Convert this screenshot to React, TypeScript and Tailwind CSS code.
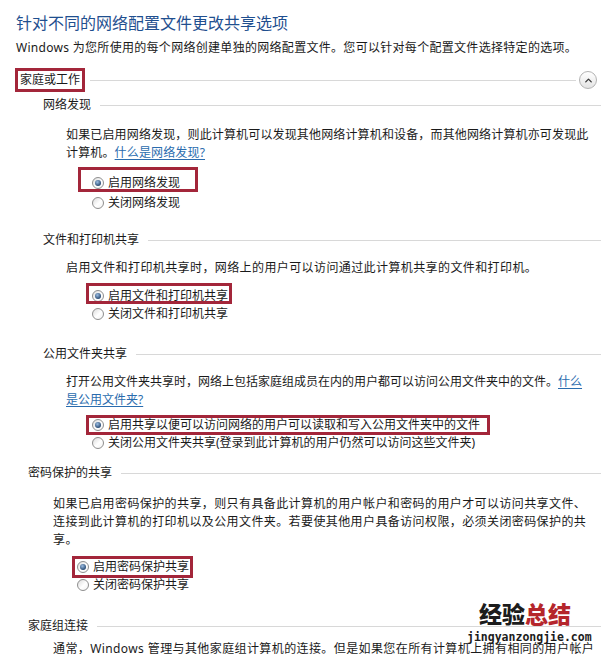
import { ChevronUp } from "lucide-react";
import clsx from "clsx";

type Option = {
  label: string;
  checked?: boolean;
  box?: string; // red annotation frame, position relative to the radio row
};

function Radio({ checked }: { checked?: boolean }) {
  return (
    <span className="flex h-[12px] w-[12px] shrink-0 items-center justify-center rounded-full border border-[#8e8e8e] bg-[linear-gradient(135deg,#dcdcdc,#ffffff_55%,#f1f1f1)]">
      {checked && (
        <span className="h-[6px] w-[6px] rounded-full bg-[radial-gradient(circle_at_40%_35%,#9cbde2,#24466f_75%)]" />
      )}
    </span>
  );
}

function Heading({ title, className }: { title: string; className: string }) {
  return (
    <div className={clsx("flex h-[18px] items-center pr-[6px]", className)}>
      <span className="leading-[18px]">{title}</span>
      <div className="ml-[9px] h-px flex-1 bg-[#d8d8d8]" />
    </div>
  );
}

function OptionRow({ opt, className }: { opt: Option; className: string }) {
  return (
    <div className={clsx("flex", className)}>
      <div className="relative flex h-[18px] items-center gap-[4px]">
        <Radio checked={opt.checked} />
        <span className="whitespace-nowrap leading-[18px]">{opt.label}</span>
        {opt.box && (
          <span
            className={clsx(
              "pointer-events-none absolute border-[3px] border-[#a3263a]",
              opt.box
            )}
          />
        )}
      </div>
    </div>
  );
}

const link = "text-[#2a6cae] underline underline-offset-2";

export default function App() {
  return (
    <div className="relative h-[654px] w-[607px] overflow-hidden bg-white pt-[13px] font-['Noto_Sans','Noto_Sans_CJK_SC',sans-serif] text-[12px] text-[#1a1a1a]">
      <h1 className="pl-[16px] text-[16px] leading-[20px] text-[#1f4f8f]">
        针对不同的网络配置文件更改共享选项
      </h1>
      <p className="mt-[6px] pl-[16px] leading-[18px] tracking-[0.3px]">
        Windows 为您所使用的每个网络创建单独的网络配置文件。您可以针对每个配置文件选择特定的选项。
      </p>

      {/* 家庭或工作 */}
      <div className="mt-[10px] flex h-[26px] items-center pl-[15px] pr-[10px]">
        <span className="border-[3px] border-[#a3263a] px-[2px] leading-[18px]">
          家庭或工作
        </span>
        <div className="ml-[5px] h-px flex-1 bg-[#d8d8d8]" />
        <span className="ml-[3px] flex h-[18px] w-[18px] items-center justify-center rounded-full border border-[#b3b3b3] bg-[linear-gradient(180deg,#ffffff,#e4e4e4)] text-[#3a3a3a]">
          <ChevronUp size={11} strokeWidth={3} />
        </span>
      </div>

      {/* 网络发现 */}
      <Heading title="网络发现" className="mt-[3px] pl-[43px]" />
      <p className="mt-[12px] whitespace-nowrap pl-[66px] leading-[18px] tracking-[0.15px]">
        如果已启用网络发现，则此计算机可以发现其他网络计算机和设备，而其他网络计算机亦可发现此
        <br />
        计算机。<span className={link}>什么是网络发现?</span>
      </p>
      <OptionRow
        className="mt-[12px] pl-[92px]"
        opt={{
          label: "启用网络发现",
          checked: true,
          box: "left-[-14px] top-[-7px] h-[25px] w-[120px]",
        }}
      />
      <OptionRow className="mt-[2px] pl-[92px]" opt={{ label: "关闭网络发现" }} />

      {/* 文件和打印机共享 */}
      <Heading title="文件和打印机共享" className="mt-[19px] pl-[43px]" />
      <p className="mt-[10px] whitespace-nowrap pl-[66px] leading-[18px] tracking-[0.4px]">
        启用文件和打印机共享时，网络上的用户可以访问通过此计算机共享的文件和打印机。
      </p>
      <OptionRow
        className="mt-[10px] pl-[92px]"
        opt={{
          label: "启用文件和打印机共享",
          checked: true,
          box: "left-[-6px] top-[-4px] h-[21px] w-[146px]",
        }}
      />
      <OptionRow className="pl-[92px]" opt={{ label: "关闭文件和打印机共享" }} />

      {/* 公用文件夹共享 */}
      <Heading title="公用文件夹共享" className="mt-[22px] pl-[43px]" />
      <p className="mt-[10px] whitespace-nowrap pl-[66px] leading-[18px]">
        打开公用文件夹共享时，网络上包括家庭组成员在内的用户都可以访问公用文件夹中的文件。
        <span className={link}>什么</span>
        <br />
        <span className={link}>是公用文件夹?</span>
      </p>
      <OptionRow
        className="mt-[7px] pl-[92px]"
        opt={{
          label: "启用共享以便可以访问网络的用户可以读取和写入公用文件夹中的文件",
          checked: true,
          box: "left-[-6px] top-[-1px] h-[20px] w-[404px]",
        }}
      />
      <OptionRow
        className="pl-[92px]"
        opt={{ label: "关闭公用文件夹共享(登录到此计算机的用户仍然可以访问这些文件夹)" }}
      />

      {/* 密码保护的共享 */}
      <Heading title="密码保护的共享" className="mt-[12px] pl-[28px]" />
      <p className="mt-[13px] whitespace-nowrap pl-[53px] leading-[18px] tracking-[0.4px]">
        如果已启用密码保护的共享，则只有具备此计算机的用户帐户和密码的用户才可以访问共享文件、
        <br />
        连接到此计算机的打印机以及公用文件夹。若要使其他用户具备访问权限，必须关闭密码保护的共
        <br />
        享。
      </p>
      <OptionRow
        className="mt-[9px] pl-[77px]"
        opt={{
          label: "启用密码保护共享",
          checked: true,
          box: "left-[-5px] top-[-2px] h-[22px] w-[121px]",
        }}
      />
      <OptionRow className="pl-[77px]" opt={{ label: "关闭密码保护共享" }} />

      {/* 家庭组连接 */}
      <Heading title="家庭组连接" className="mt-[23px] pl-[28px]" />
      <p className="mt-[5px] whitespace-nowrap pl-[53px] leading-[18px] tracking-[0.4px]">
        通常，Windows 管理与其他家庭组计算机的连接。但是如果您在所有计算机上拥有相同的用户帐户
      </p>

      {/* watermark */}
      <div className="absolute left-[479px] top-[600px] font-['Noto_Sans_CJK_SC',sans-serif] text-[23px] font-black leading-[26px] text-[#1c1c1c]">
        经验<span className="text-[#b5262c]">总结</span>
      </div>
      <div className="absolute left-[467px] top-[630px] font-['DejaVu_Sans_Mono',monospace] text-[11.5px] font-bold leading-[14px] text-[#1c1c1c]">
        jingyanzongjie.com
      </div>
    </div>
  );
}
